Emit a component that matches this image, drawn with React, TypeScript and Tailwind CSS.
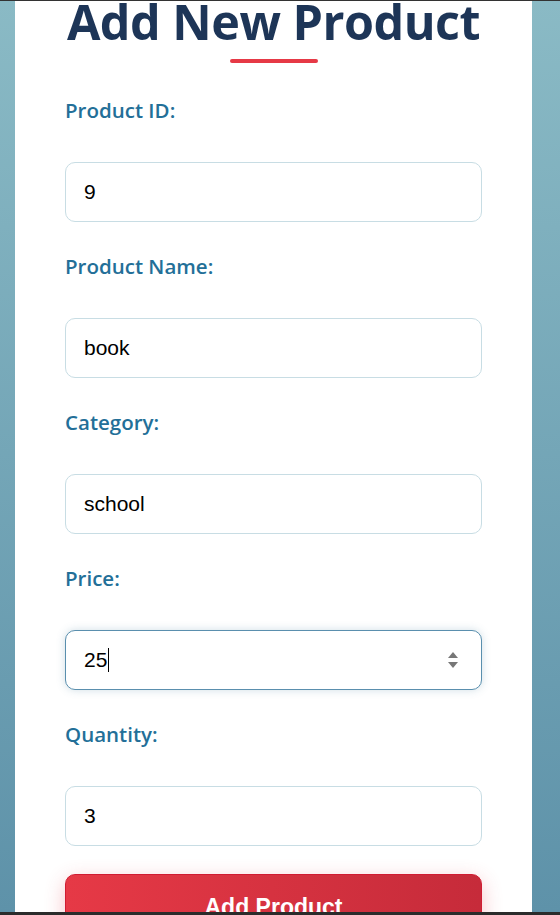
import React from 'react';

const fields = [
  { id: 'pid', label: 'Product ID:', value: '9' },
  { id: 'pname', label: 'Product Name:', value: 'book' },
  { id: 'cat', label: 'Category:', value: 'school' },
];

const labelCls =
  "block h-[30px] text-[20.5px] leading-[30px] font-semibold text-[#236f98] [font-family:'Open_Sans',sans-serif]";
const inputCls =
  "block w-full h-[60px] px-[18px] rounded-[10px] border border-[#c8dde4] bg-white text-[21px] text-black outline-none [font-family:'Liberation_Sans',Arial,sans-serif]";

const App = () => {
  return (
    <div className="h-[915px] flex flex-col overflow-hidden">
      <div className="h-px bg-[#333333]" />
      <div className="flex-1 overflow-hidden bg-gradient-to-b from-[#8abac5] to-[#5e92a9]">
        <div className="ml-[15px] w-[517px] min-h-full bg-white px-[50px] pb-10">
          <h1 className="-mt-[12px] text-center text-[48.5px] leading-[64px] font-bold text-[#1d3557] [font-family:'Open_Sans',sans-serif] tracking-[-0.5px]">
            Add New Product
          </h1>
          <div className="mx-auto mt-[6px] w-[88px] h-1 rounded-full bg-[#e63946]" />

          <form className="mt-[32px]" onSubmit={(e) => e.preventDefault()}>
            {fields.map((f) => (
              <div key={f.id} className="mb-[29px]">
                <label htmlFor={f.id} className={labelCls}>
                  {f.label}
                </label>
                <input id={f.id} defaultValue={f.value} className={`${inputCls} mt-[37px]`} />
              </div>
            ))}

            <div className="mb-[29px]">
              <label className={labelCls}>Price:</label>
              <div className="mt-[37px] flex items-center h-[60px] px-[18px] rounded-[10px] border border-[#5a8fae] bg-white shadow-[0_0_8px_rgba(69,123,157,0.25)] text-[21px] text-black [font-family:'Liberation_Sans',Arial,sans-serif]">
                <span>25</span>
                <span className="ml-px w-px h-[24px] bg-black" />
                <svg className="ml-auto mr-[4px]" width="12" height="22" viewBox="0 0 12 22">
                  <path d="M6 3 L11 9 L1 9 Z" fill="#777777" />
                  <path d="M6 19 L11 13 L1 13 Z" fill="#777777" />
                </svg>
              </div>
            </div>

            <div className="mb-[28px]">
              <label htmlFor="qty" className={labelCls}>
                Quantity:
              </label>
              <input id="qty" defaultValue="3" className={`${inputCls} mt-[37px]`} />
            </div>

            <button
              type="submit"
              className="w-full h-[62px] pt-[4px] rounded-[10px] border border-[#d01c32] bg-gradient-to-r from-[#e63946] to-[#c62b3a] text-white text-[23px] font-bold shadow-[0_6px_20px_rgba(230,57,70,0.3)] [font-family:'Liberation_Sans',Arial,sans-serif]"
            >
              Add Product
            </button>
          </form>
        </div>
      </div>
      <div className="h-[3px] bg-[#2b2b2b]" />
    </div>
  );
};

export default App;
